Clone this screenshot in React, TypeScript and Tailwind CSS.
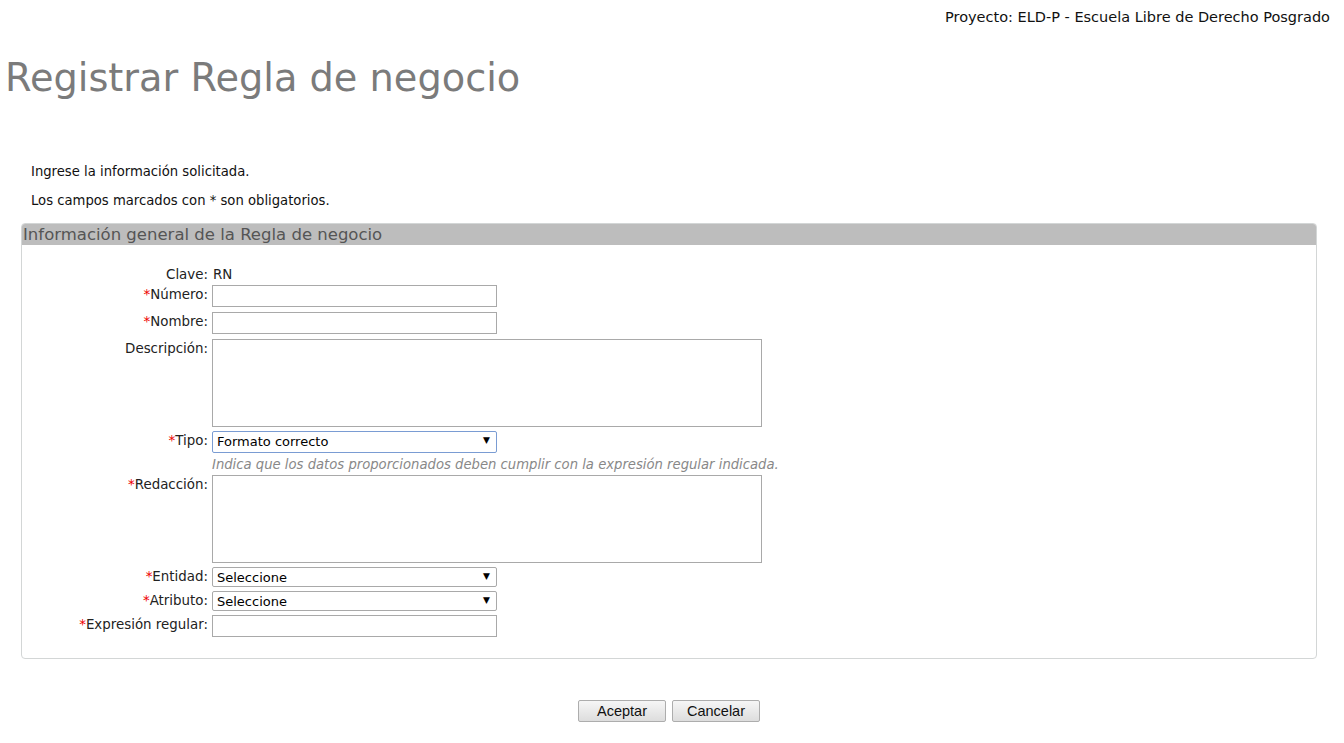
import React from 'react';

const font = { fontFamily: 'Verdana, "DejaVu Sans", sans-serif' };

function Label({ text, required }: { text: string; required?: boolean }) {
  return (
    <label className="w-[186px] shrink-0 text-right pt-[0px] text-[13.4px] text-[#222]">
      {required && <span className="text-[#e00]">*</span>}
      {text}:
    </label>
  );
}

function Select({ value, focused }: { value: string; focused?: boolean }) {
  return (
    <div
      className={
        focused
          ? 'relative w-[285px] h-[22px] border border-[#7a9cd3] rounded-[2px] bg-white'
          : 'relative w-[285px] h-[20px] border border-[#a9a9a9] rounded-[2px] bg-white'
      }
    >
      <select
        defaultValue={value}
        className="w-full h-full appearance-none bg-transparent pl-[4px] text-[13px] text-black outline-none"
        style={font}
      >
        <option>{value}</option>
      </select>
      <span className="pointer-events-none absolute right-[6px] top-[2px] text-[9px] text-black">▼</span>
    </div>
  );
}

export default function App() {
  return (
    <div className="min-h-screen bg-white text-[13px] text-[#111]" style={font}>
      <div className="flex justify-end pr-[14px] pt-[7px] text-[14.5px] text-[#111]">
        Proyecto: ELD-P - Escuela Libre de Derecho Posgrado
      </div>

      <h1 className="pl-[5px] mt-[25px] text-[38.3px] leading-[48px] text-[#7b7b7b]">
        Registrar Regla de negocio
      </h1>

      <div className="pl-[31px] mt-[62px]">
        <p className="leading-[16px] text-[13.2px]">Ingrese la información solicitada.</p>
        <p className="leading-[16px] mt-[13px] text-[13.2px]">Los campos marcados con * son obligatorios.</p>
      </div>

      <div className="ml-[21px] mr-[27px] mt-[14px] border border-[#d3d6d6] rounded-[4px] h-[436px]">
        <div className="bg-[#bdbdbd] h-[21px] rounded-t-[3px] pl-[1px] text-[16.5px] leading-[21px] text-[#555]">
          Información general de la Regla de negocio
        </div>

        <div className="pt-[20px] flex flex-col">
          <div className="flex gap-[5px] h-[20px]">
            <span className="w-[186px] shrink-0 text-right text-[13.4px] text-[#222]">Clave:</span>
            <span className="text-[13.4px] text-[#222]">RN</span>
          </div>

          <div className="flex gap-[4px] items-start">
            <Label text="Número" required />
            <input className="w-[285px] h-[22px] border border-[#a9a9a9] bg-white" />
          </div>

          <div className="flex gap-[4px] items-start mt-[5px]">
            <Label text="Nombre" required />
            <input className="w-[285px] h-[22px] border border-[#a9a9a9] bg-white" />
          </div>

          <div className="flex gap-[4px] items-start mt-[5px]">
            <Label text="Descripción" />
            <textarea className="w-[550px] h-[88px] border border-[#a9a9a9] bg-white resize-none" />
          </div>

          <div className="flex gap-[4px] items-start mt-[4px]">
            <Label text="Tipo" required />
            <div className="flex flex-col">
              <Select value="Formato correcto" focused />
              <span className="italic text-[13.2px] text-[#888] mt-[3px] leading-[17px]">
                Indica que los datos proporcionados deben cumplir con la expresión regular indicada.
              </span>
            </div>
          </div>

          <div className="flex gap-[4px] items-start mt-[2px]">
            <Label text="Redacción" required />
            <textarea className="w-[550px] h-[88px] border border-[#a9a9a9] bg-white resize-none" />
          </div>

          <div className="flex gap-[4px] items-start mt-[4px]">
            <Label text="Entidad" required />
            <Select value="Seleccione" />
          </div>

          <div className="flex gap-[4px] items-start mt-[4px]">
            <Label text="Atributo" required />
            <Select value="Seleccione" />
          </div>

          <div className="flex gap-[4px] items-start mt-[4px]">
            <Label text="Expresión regular" required />
            <input className="w-[285px] h-[22px] border border-[#a9a9a9] bg-white" />
          </div>
        </div>
      </div>

      <div className="flex justify-center gap-[6px] mt-[41px] pr-[6px]">
        <button
          className="w-[88px] h-[22px] border border-[#adadad] rounded-[2px] bg-gradient-to-b from-[#f6f6f6] to-[#dddddd] text-[14.5px] text-[#111]"
          style={{ fontFamily: '"Liberation Sans", Arial, sans-serif' }}
        >
          Aceptar
        </button>
        <button
          className="w-[88px] h-[22px] border border-[#adadad] rounded-[2px] bg-gradient-to-b from-[#f6f6f6] to-[#dddddd] text-[14.5px] text-[#111]"
          style={{ fontFamily: '"Liberation Sans", Arial, sans-serif' }}
        >
          Cancelar
        </button>
      </div>
    </div>
  );
}
